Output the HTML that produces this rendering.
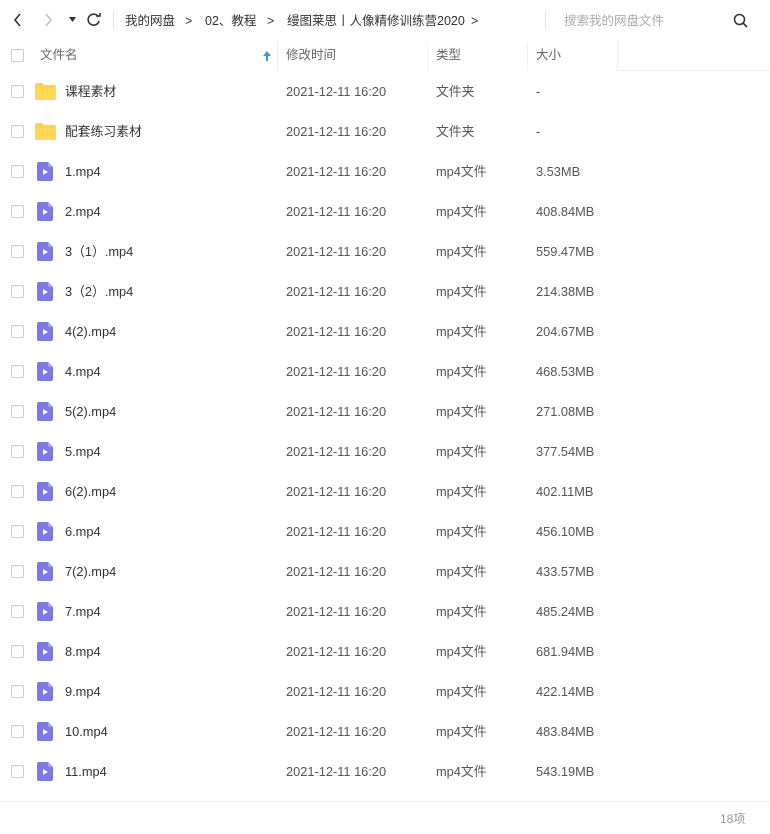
<!DOCTYPE html>
<html><head><meta charset="utf-8"><style>
*{margin:0;padding:0;box-sizing:border-box}
body{width:770px;height:834px;background:#fff;font-family:"Liberation Sans","Noto Sans CJK SC",sans-serif;font-size:12.5px;color:#333;position:relative;overflow:hidden}
.top{position:absolute;top:0;left:0;width:770px;height:40px}
.t{position:absolute;top:1px;height:40px;line-height:40px;font-size:12.5px;color:#333;white-space:nowrap}
.hdr{position:absolute;top:40px;left:0;width:770px;height:31px}
.hc{position:absolute;top:0;height:31px;line-height:31px;font-size:12.5px;color:#666}
.cb{position:absolute;left:11px;width:13px;height:13px;border:1px solid #ccc;border-radius:2px;background:#fff}
.row{position:absolute;left:0;width:770px;height:40px}
.row .cb{top:14px}
.row span{position:absolute;top:1px;height:40px;line-height:40px;font-size:12.8px;white-space:nowrap}
.nm{left:65px;color:#333}
.tm{left:286px;color:#555}
.tp{left:436px;color:#555}
.sz{left:536px;color:#555}
.ic{position:absolute;left:37px;top:11px}
</style></head><body>
<div class="top">
<svg style="position:absolute;left:12px;top:12px" width="12" height="16"><path d="M8 2 L3 8 L8 14" stroke="#333" stroke-width="1.6" fill="none"/></svg>
<svg style="position:absolute;left:42px;top:12px" width="12" height="16"><path d="M4 2 L9 8 L4 14" stroke="#bbb" stroke-width="1.4" fill="none"/></svg>
<svg style="position:absolute;left:69px;top:17px" width="8" height="6"><path d="M0 0 L7 0 L3.5 5Z" fill="#333"/></svg>
<svg style="position:absolute;left:86px;top:12px" width="16" height="16"><path d="M12.5 5 A5.5 5.5 0 1 0 13 9" stroke="#333" stroke-width="1.6" fill="none"/><path d="M10 4 L14 4 L14 1" stroke="#333" stroke-width="1.6" fill="none"/></svg>
<div style="position:absolute;left:113px;top:11px;width:1px;height:18px;background:#e5e5e5"></div>
<span class="t" style="left:125px">我的网盘</span>
<span class="t" style="left:185px">&gt;</span>
<span class="t" style="left:205px">02、教程</span>
<span class="t" style="left:267px">&gt;</span>
<span class="t" style="left:287px">缦图莱思丨人像精修训练营2020</span>
<span class="t" style="left:471px">&gt;</span>
<div style="position:absolute;left:545px;top:11px;width:1px;height:18px;background:#e5e5e5"></div>
<span class="t" style="left:564px;color:#aaa">搜索我的网盘文件</span>
<svg style="position:absolute;left:733px;top:13px" width="15" height="15"><circle cx="6.5" cy="6.5" r="5" stroke="#333" stroke-width="1.5" fill="none"/><path d="M10 10 L14 14" stroke="#333" stroke-width="1.6"/></svg>
</div>
<div class="hdr">
<div class="cb" style="top:9px"></div>
<span class="hc" style="left:40px">文件名</span>
<svg style="position:absolute;left:263px;top:11px" width="8" height="10"><path d="M4 0 L8 5 L5 5 L5 10 L3 10 L3 5 L0 5Z" fill="#3b9ad8"/></svg>
<div style="position:absolute;left:277px;top:2px;width:1px;height:29px;background:#eee"></div>
<span class="hc" style="left:286px">修改时间</span>
<div style="position:absolute;left:427px;top:2px;width:1px;height:29px;background:#f2f2f2"></div>
<span class="hc" style="left:436px">类型</span>
<div style="position:absolute;left:527px;top:2px;width:1px;height:29px;background:#f2f2f2"></div>
<span class="hc" style="left:536px">大小</span>
<div style="position:absolute;left:617px;top:0;width:1px;height:31px;background:#eee"></div>
<div style="position:absolute;left:617px;top:30px;width:153px;height:1px;background:#eee"></div>
</div>
<div id="rows"></div>
<div style="position:absolute;left:0;top:801px;width:770px;height:1px;background:#eee"></div>
<span style="position:absolute;left:720px;top:810px;font-size:12px;color:#999">18项</span>
<script>
var d=[["课程素材","文件夹","-"],["配套练习素材","文件夹","-"],["1.mp4","","3.53MB"],["2.mp4","","408.84MB"],["3（1）.mp4","","559.47MB"],["3（2）.mp4","","214.38MB"],["4(2).mp4","","204.67MB"],["4.mp4","","468.53MB"],["5(2).mp4","","271.08MB"],["5.mp4","","377.54MB"],["6(2).mp4","","402.11MB"],["6.mp4","","456.10MB"],["7(2).mp4","","433.57MB"],["7.mp4","","485.24MB"],["8.mp4","","681.94MB"],["9.mp4","","422.14MB"],["10.mp4","","483.84MB"],["11.mp4","","543.19MB"]];
var h="";d.forEach(function(r,i){var y=71+i*40;var folder=r[1]=="文件夹";
var ic=folder?'<svg class="ic" style="left:35px;top:12px" width="21" height="17"><path d="M0 2 Q0 0 2 0 L7 0 L9 2 L19 2 Q21 2 21 4 L21 15 Q21 17 19 17 L2 17 Q0 17 0 15Z" fill="#fcd34d"/><path d="M0 5 L21 5 L21 15 Q21 17 19 17 L2 17 Q0 17 0 15Z" fill="#ffd956"/></svg>'
:'<svg class="ic" width="16" height="19"><path d="M2 0 L11 0 L16 5 L16 17 Q16 19 14 19 L2 19 Q0 19 0 17 L0 2 Q0 0 2 0Z" fill="#7b79e6"/><path d="M11 0 L16 5 L12 5 Q11 5 11 4Z" fill="#a9a7f2"/><path d="M6 7 L11 10 L6 13Z" fill="#fff"/></svg>';
h+='<div class="row" style="top:'+y+'px"><div class="cb"></div>'+ic+'<span class="nm">'+r[0]+'</span><span class="tm">2021-12-11 16:20</span><span class="tp">'+(folder?"文件夹":"mp4文件")+'</span><span class="sz">'+r[2]+'</span></div>';});
document.getElementById("rows").innerHTML=h;
</script>
</body></html>
